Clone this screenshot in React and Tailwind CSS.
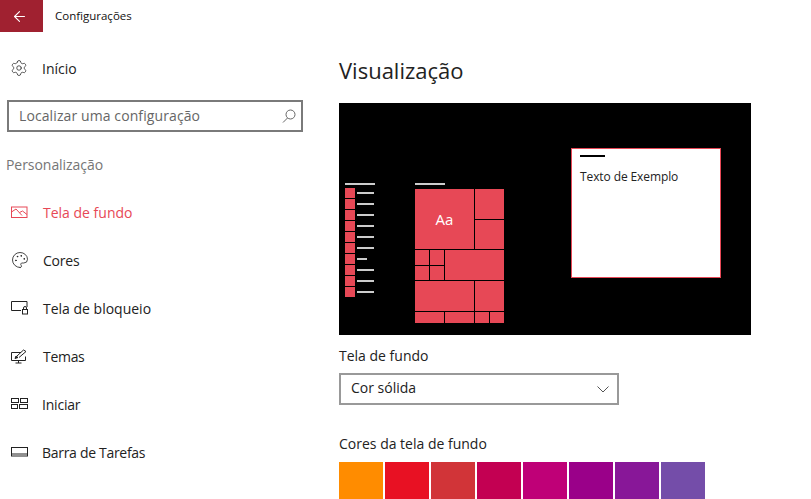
import React from 'react'
import { ArrowLeft, Palette, Settings } from 'lucide-react'

const WallpaperIcon = () => (
    <svg width="17" height="13" viewBox="0 0 17 13" fill="none" stroke="currentColor" strokeWidth="1">
        <rect x="0.5" y="1" width="15.5" height="10.5" />
        <path d="M0.5 6 L5 3 L11 9.5 M8.5 6.5 L11.5 5 L16 8.5" />
    </svg>
)

const LockScreenIcon = () => (
    <svg width="17" height="14" viewBox="0 0 17 14" fill="none" stroke="currentColor" strokeWidth="1">
        <path d="M10 9.5 H0.5 V0.5 H16 V6" />
        <rect x="11.5" y="8.5" width="5" height="4.5" />
        <path d="M12.5 8.5 V7 A1.5 1.5 0 0 1 15.5 7 V8.5" />
    </svg>
)

const ThemesIcon = () => (
    <svg width="17" height="15" viewBox="0 0 17 15" fill="none" stroke="currentColor" strokeWidth="1">
        <path d="M10 3.5 H0.5 V11.5 H14.5 V7.5" />
        <path d="M4.5 14 H10.5 M7.5 11.5 V14" />
        <path d="M4 9.5 L5 7 L7 8.5 Z" fill="currentColor" />
        <path d="M6 7 L12.5 1 L15 2.5 L8 8.5" />
    </svg>
)

const StartIcon = () => (
    <svg width="17" height="12" viewBox="0 0 17 12" fill="none" stroke="currentColor" strokeWidth="1">
        <rect x="0.5" y="0.5" width="7" height="4" />
        <rect x="9.5" y="0.5" width="7" height="4" />
        <rect x="0.5" y="6.5" width="6" height="4" />
        <rect x="8.5" y="6.5" width="8" height="4" />
    </svg>
)

const TaskbarIcon = () => (
    <svg width="17" height="10" viewBox="0 0 17 10" fill="none" stroke="currentColor" strokeWidth="1">
        <rect x="0.5" y="0.5" width="16" height="8.5" />
        <path d="M0.5 7 H16.5" />
    </svg>
)

const SearchIcon = () => (
    <svg width="14" height="14" viewBox="0 0 14 14" fill="none" stroke="#666666" strokeWidth="1">
        <circle cx="8.5" cy="5.5" r="4.5" />
        <path d="M5.5 9 L1 13.5" />
    </svg>
)

const menuItems = [
    { name: 'Tela de fundo', icon: <WallpaperIcon />, active: true, tracking: 'tracking-normal' },
    { name: 'Cores', icon: <Palette size={18} strokeWidth={1.1} />, tracking: 'tracking-[-0.2px]' },
    { name: 'Tela de bloqueio', icon: <LockScreenIcon />, tracking: 'tracking-normal' },
    { name: 'Temas', icon: <ThemesIcon />, tracking: 'tracking-[-0.3px]' },
    { name: 'Iniciar', icon: <StartIcon />, tracking: 'tracking-[-0.2px] -ml-px' },
    { name: 'Barra de Tarefas', icon: <TaskbarIcon />, tracking: 'tracking-[-0.3px] -ml-px' },
]

const swatches = [
    'bg-[#ff8c00]',
    'bg-[#e81123]',
    'bg-[#d13438]',
    'bg-[#c30052]',
    'bg-[#bf0077]',
    'bg-[#9a0089]',
    'bg-[#881798]',
    'bg-[#744da9]',
]

const startLines = ['w-[17px]', 'w-[17px]', 'w-[17px]', 'w-[17px]', 'w-[17px]', 'w-[17px]', 'w-[10px]', 'w-[17px]', 'w-[17px]', 'w-[17px]']

const Tile = ({ className = '', children }) => (
    <div className={`bg-[#e74856] flex items-center justify-center ${className}`}>{children}</div>
)

const Preview = () => (
    <div className="w-[412px] h-[232px] bg-black flex items-start">
        {/* Start list */}
        <div className="ml-[6px] mt-[80px] w-[30px] flex flex-col">
            <div className="w-[30px] h-[2px] bg-[#cccccc] mb-[3px]" />
            {startLines.map((w, i) => (
                <div key={i} className="flex items-center gap-[2px] h-[10px] mb-px">
                    <div className="w-[10px] h-[10px] bg-[#e74856]" />
                    <div className={`${w} h-[2px] bg-[#cccccc]`} />
                </div>
            ))}
        </div>

        {/* Tiles */}
        <div className="ml-[40px] mt-[80px]">
            <div className="w-[30px] h-[2px] bg-[#cccccc] mb-[4px]" />
            <div className="grid gap-px grid-cols-[repeat(6,14px)] grid-rows-[30px_29px_15px_14px_30px_11px]">
                <Tile className="col-span-4 row-span-2 text-white text-[15px]">Aa</Tile>
                <Tile className="col-span-2" />
                <Tile className="col-span-2" />
                <Tile />
                <Tile />
                <Tile className="col-span-4 row-span-2" />
                <Tile />
                <Tile />
                <Tile className="col-span-4" />
                <Tile className="col-span-2" />
                <Tile className="col-span-2" />
                <Tile className="col-span-2" />
                <Tile />
                <Tile />
            </div>
        </div>

        {/* Sample window */}
        <div className="ml-[67px] mt-[45px] w-[150px] h-[130px] bg-white border border-[#e74856] pl-[8px] pt-[6px]">
            <div className="w-[25px] h-[2px] bg-black" />
            <div className="mt-[12px] text-[12px] leading-4 tracking-[-0.1px] text-[#222222]">Texto de Exemplo</div>
        </div>
    </div>
)

export default function App() {
    return (
        <div className="w-[811px] h-[499px] overflow-hidden bg-white text-black flex flex-col font-['Open_Sans','Noto_Sans',sans-serif]">
            {/* Title bar */}
            <header className="h-8 shrink-0 flex items-center">
                <div className="w-[43px] h-8 bg-[#a02130] text-white flex items-center justify-center">
                    <ArrowLeft size={17} strokeWidth={1.5} className="-ml-[5px]" />
                </div>
                <span className="ml-3 text-[11.5px] text-[#111111]">Configurações</span>
            </header>

            <div className="flex grow min-h-0">
                {/* Sidebar */}
                <aside className="w-[339px] shrink-0 flex flex-col">
                    <div className="h-[24px] mt-[25px] pb-[2px] flex items-center pl-[10px] text-[#222222]">
                        <span className="w-[32px]"><Settings size={18} strokeWidth={1} /></span>
                        <span className="text-[14px]">Início</span>
                    </div>
                    <div className="mt-[19px] ml-[7px] w-[296px] h-8 pb-px border-2 border-[#7a7a7a] flex items-center justify-between pl-[10px] pr-[5px]">
                        <span className="text-[14px] tracking-[0.1px] text-[#666666]">Localizar uma configuração</span>
                        <SearchIcon />
                    </div>
                    <div className="mt-[22px] ml-[6px] text-[14px] leading-[22px] tracking-[-0.05px] text-[#767676]">Personalização</div>
                    <nav className="mt-[13px] flex flex-col">
                        {menuItems.map((item) => (
                            <div
                                key={item.name}
                                className={`h-12 pb-[2px] flex items-center pl-[11px] ${item.active ? 'text-[#e74856]' : 'text-[#222222]'}`}
                            >
                                <span className="w-[32px] flex items-center">{item.icon}</span>
                                <span className={`text-[14px] ${item.tracking}`}>{item.name}</span>
                            </div>
                        ))}
                    </nav>
                </aside>

                {/* Main */}
                <main className="grow">
                    <h1 className="mt-[21px] text-[22px] leading-[34px] text-[#222222]">Visualização</h1>
                    <div className="mt-[16px]"><Preview /></div>
                    <div className="mt-[11px] text-[14px] leading-5 text-[#222222]">Tela de fundo</div>
                    <div className="mt-[7px] w-[280px] h-8 pb-[3px] border-2 border-[#999999] flex items-center justify-between pl-[10px] pr-[8px]">
                        <span className="text-[14px] text-[#222222]">Cor sólida</span>
                        <svg width="12" height="7" viewBox="0 0 12 7" fill="none" stroke="#555555" strokeWidth="1" className="mt-[3px]">
                            <path d="M0.5 0.5 L6 6 L11.5 0.5" />
                        </svg>
                    </div>
                    <div className="mt-[29px] text-[14px] leading-5 text-[#222222]">Cores da tela de fundo</div>
                    <div className="mt-[8px] flex gap-[2px]">
                        {swatches.map((c) => (
                            <div key={c} className={`w-[44px] h-[37px] ${c}`} />
                        ))}
                    </div>
                </main>
            </div>
        </div>
    )
}
